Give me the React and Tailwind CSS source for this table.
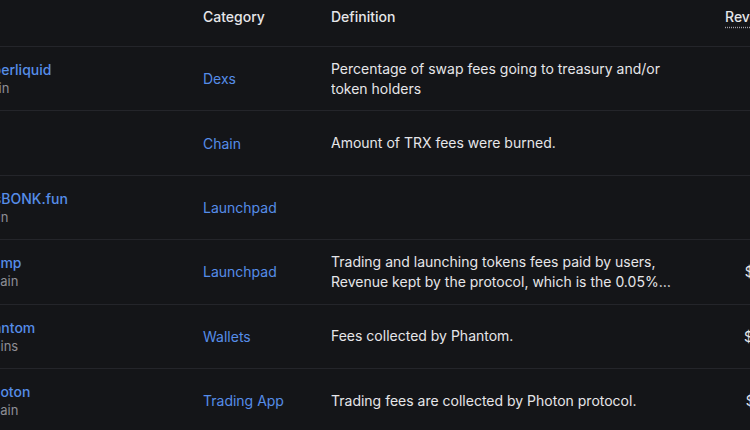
const rows = [
  {
    name: 'Hyperliquid',
    chains: 'Chain',
    pad: 'pl-[10px]',
    category: 'Dexs',
    definition: 'Percentage of swap fees going to treasury and/or token holders',
    revenue: '$912,480',
  },
  {
    name: 'Tron',
    chains: 'Chain',
    pad: 'pl-0',
    category: 'Chain',
    definition: 'Amount of TRX fees were burned.',
    revenue: '$874,115',
  },
  {
    name: 'LetsBONK.fun',
    chains: 'Chain',
    pad: 'pl-[9px]',
    category: 'Launchpad',
    definition: '',
    revenue: '$651,302',
  },
  {
    name: 'Pump',
    chains: 'Chain',
    pad: 'pl-[19px]',
    category: 'Launchpad',
    definition:
      'Trading and launching tokens fees paid by users, Revenue kept by the protocol, which is the 0.05% fee charged on every trade.',
    revenue: '$1,204,877',
  },
  {
    name: 'Phantom',
    chains: 'Chains',
    pad: 'pl-[12px]',
    category: 'Wallets',
    definition: 'Fees collected by Phantom.',
    revenue: '$1,098,560',
  },
  {
    name: 'Photon',
    chains: 'Chain',
    pad: 'pl-[19px]',
    category: 'Trading App',
    definition: 'Trading fees are collected by Photon protocol.',
    revenue: '$1,087,943',
  },
];

const cols = 'grid grid-cols-[239px_128px_394px_96px]';

export default function App() {
  return (
    <div
      className="w-[750px] h-[430px] overflow-hidden bg-[#141518] text-[#e6e6e9]"
      style={{ fontFamily: 'Inter, "Noto Sans", sans-serif' }}
    >
      {/* table scrolled sideways, name column partly out of view */}
      <div className="-ml-[36px] w-[900px]">
        {/* Header */}
        <div className={`${cols} h-[46px] pt-[7px] text-[14px] font-medium leading-5`}>
          <div className="-ml-[30px]">Name</div>
          <div>Category</div>
          <div>Definition</div>
          <div className="whitespace-nowrap">
            <span className="underline decoration-dotted decoration-[#a0a0a6] underline-offset-[5px]">
              Revenue 24h
            </span>
          </div>
        </div>

        {/* Rows */}
        {rows.map(row => (
          <div
            key={row.name}
            className={`${cols} h-[64.4px] items-center border-t border-[#24252a] text-[14px]`}
          >
            <div className={`flex flex-col ${row.pad}`}>
              <span className="font-medium leading-5 text-[#568de8]">{row.name}</span>
              <span className="text-[13px] leading-[17px] text-[#8e8e95]">{row.chains}</span>
            </div>
            <div className="text-[#568de8]">{row.category}</div>
            <div className="w-[345px] leading-5 line-clamp-2">{row.definition}</div>
            <div className="pr-[3px] text-right whitespace-nowrap">{row.revenue}</div>
          </div>
        ))}
      </div>
    </div>
  );
}
